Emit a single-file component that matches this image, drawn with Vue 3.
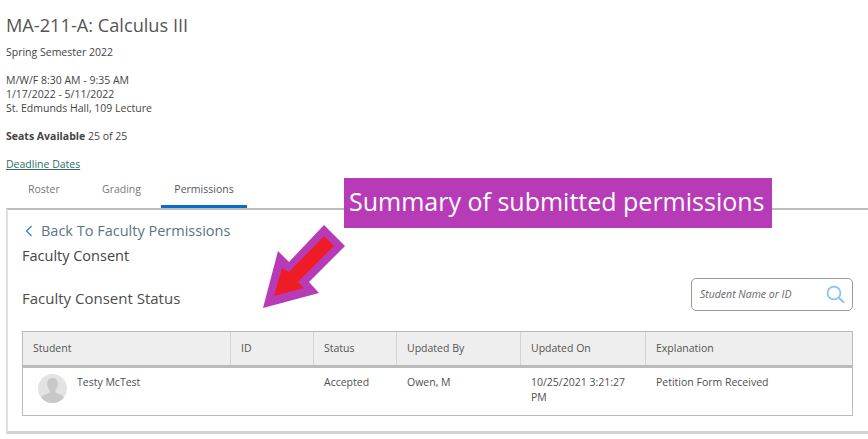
<script setup>
const columns = [
  { label: 'Student', width: '207px' },
  { label: 'ID', width: '83px' },
  { label: 'Status', width: '83px' },
  { label: 'Updated By', width: '124px' },
  { label: 'Updated On', width: '125px' },
  { label: 'Explanation', width: 'auto' }
]
const gridColumns = columns.map((c) => (c.width === 'auto' ? '1fr' : c.width)).join(' ')
</script>

<template>
  <div class="page">
    <section class="course">
      <h1 class="title">MA-211-A: Calculus III</h1>
      <p class="line term">Spring Semester 2022</p>
      <div class="block">
        <p class="line">M/W/F 8:30 AM - 9:35 AM</p>
        <p class="line">1/17/2022 - 5/11/2022</p>
        <p class="line">St. Edmunds Hall, 109 Lecture</p>
      </div>
      <p class="line seats"><strong>Seats Available</strong> 25 of 25</p>
      <a class="line deadline">Deadline Dates</a>
    </section>

    <nav class="tabs">
      <span class="tab tab-roster">Roster</span>
      <span class="tab tab-grading">Grading</span>
      <span class="tab tab-active">Permissions</span>
    </nav>

    <section class="panel">
      <a class="back">
        <svg class="chevron" width="8" height="12" viewBox="0 0 8 12" aria-hidden="true">
          <path d="M6.5 1 L1.5 6 L6.5 11" fill="none" stroke="#2f80d0" stroke-width="1.3" />
        </svg>
        Back To Faculty Permissions
      </a>
      <h2 class="consent">Faculty Consent</h2>
      <div class="status-row">
        <h3 class="status-title">Faculty Consent Status</h3>
        <div class="search">
          <span class="placeholder">Student Name or ID</span>
          <svg class="search-icon" width="20" height="20" viewBox="0 0 20 20" aria-hidden="true">
            <circle cx="8" cy="8" r="6.4" fill="none" stroke="#85c1f5" stroke-width="1.7" />
            <path d="M12.800 12.800 L18 17.500" stroke="#85c1f5" stroke-width="2" />
          </svg>
        </div>
      </div>

      <div class="table">
        <div class="head" :style="{ gridTemplateColumns: gridColumns }">
          <div v-for="c in columns" :key="c.label" class="th">{{ c.label }}</div>
        </div>
        <div class="row" :style="{ gridTemplateColumns: gridColumns }">
          <div class="td student">
            <span class="avatar">
              <svg width="29" height="29" viewBox="0 0 29 29" aria-hidden="true">
                <clipPath id="avatar-clip"><circle cx="14.5" cy="14.5" r="14.5" /></clipPath>
                <circle cx="14.5" cy="14.5" r="14.5" fill="#e3e3e3" />
                <path clip-path="url(#avatar-clip)" d="M14.500 4c-3.400 0-5.300 2.500-5.300 6 0 2.600 1 4.700 2.500 6v2.500c-1.800 1.200-6.500 1.800-8.200 4.200v6.300h22v-6.300c-1.700-2.400-6.400-3-8.200-4.200v-2.500c1.500-1.300 2.500-3.400 2.500-6 0-3.500-1.900-6-5.300-6z" fill="#c8c8c8" />
              </svg>
            </span>
            <span class="name">Testy McTest</span>
          </div>
          <div class="td"></div>
          <div class="td">Accepted</div>
          <div class="td">Owen, M</div>
          <div class="td updated">10/25/2021 3:21:27 PM</div>
          <div class="td">Petition Form Received</div>
        </div>
      </div>
    </section>

    <div class="callout">Summary of submitted permissions</div>
    <svg class="arrow" width="868" height="439" viewBox="0 0 868 439" aria-hidden="true">
      <polygon points="263,308 278,251 289,262 324,225 345,246 309,282 319,293" fill="#b73bb7" />
      <polygon points="274,296 282,268 289,272 324,236 334,246 298,282 304,288" fill="#ee1c25" />
    </svg>
  </div>
</template>

<style>
html, body { margin: 0; background: #fff; }
</style>

<style scoped>
.page {
  position: relative;
  width: 868px;
  height: 439px;
  overflow: hidden;
  background: #fff;
  font-family: "Open Sans", sans-serif;
  font-size: 10.5px;
  line-height: 14px;
  color: #444;
}
.course { padding: 15px 0 0 6px; }
.title {
  margin: 0;
  font-size: 18.2px;
  font-weight: 400;
  line-height: 21px;
  color: #555;
}
.line { display: block; margin: 0; }
.term { margin-top: 9px; }
.block { margin-top: 14px; }
.seats { margin-top: 14px; }
.seats strong { font-weight: 700; }
.deadline {
  margin-top: 14px;
  width: max-content;
  color: #2e6e62;
  text-decoration: underline;
}
.tabs {
  display: flex;
  height: 37px;
  box-sizing: border-box;
  padding-left: 161px;
  position: relative;
}
.tab {
  box-sizing: border-box;
  height: 37px;
  line-height: 36px;
  color: #777;
}
.tab-roster { position: absolute; left: 28px; }
.tab-grading { position: absolute; left: 102px; }
.tab-active {
  width: 86px;
  text-align: center;
  color: #555;
  font-weight: 500;
  border-bottom: 3px solid #0a6ccf;
}
.panel {
  box-sizing: border-box;
  height: 226px;
  margin-left: 6px;
  border-top: 2px solid #bdbdbd;
  border-left: 2px solid #e0e0e0;
  border-bottom: 3px solid #d3d3d3;
  padding: 12px 15px 0 14px;
}
.back {
  display: flex;
  align-items: center;
  gap: 8px;
  height: 18px;
  padding-left: 3px;
  font-size: 14.5px;
  color: #5a7583;
}
.consent {
  margin: 6px 0 0;
  font-size: 14.5px;
  line-height: 20px;
  font-weight: 500;
  color: #444;
}
.status-row {
  display: flex;
  align-items: flex-start;
  justify-content: space-between;
  margin-top: 12px;
}
.status-title {
  margin: 10px 0 0;
  font-size: 15px;
  font-weight: 400;
  line-height: 20px;
  color: #4d4d4d;
}
.search {
  box-sizing: border-box;
  width: 162px;
  height: 33px;
  display: flex;
  align-items: center;
  justify-content: space-between;
  padding: 0 6px 0 8px;
  border: 1px solid #999;
  border-radius: 5px;
}
.search-icon { margin-top: 1px; }
.placeholder {
  font-size: 10.5px;
  font-style: italic;
  color: #666;
  margin-top: -1px;
}
.table {
  margin-top: 20px;
  border: 1px solid #bbb;
}
.head, .row { display: grid; }
.head {
  height: 36px;
  box-sizing: border-box;
  background: #eee;
  border-bottom: 3px solid #bbb;
}
.th {
  padding: 9px 0 0 10px;
  border-left: 1px solid #d4d4d4;
  color: #555;
}
.th:first-child { border-left: 0; }
.row { height: 47px; box-sizing: border-box; }
.td { padding: 7px 10px 0 11px; color: #4f4f4f; }
.student { display: flex; gap: 10px; padding-left: 15px; padding-top: 6px; }
.name { padding-top: 1px; }
.avatar { display: block; width: 29px; height: 29px; }
.updated { padding-right: 8px; line-height: 15px; padding-top: 7px; }
.callout {
  position: absolute;
  left: 344px;
  top: 178px;
  width: 428px;
  height: 50px;
  box-sizing: border-box;
  padding-left: 5px;
  background: #b73bb7;
  color: #fff;
  font-size: 25px;
  line-height: 47px;
  white-space: nowrap;
}
.arrow { position: absolute; left: 0; top: 0; pointer-events: none; }
</style>
